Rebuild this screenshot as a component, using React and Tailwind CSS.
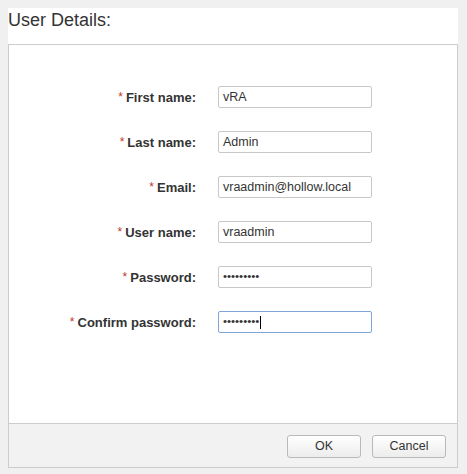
import React from "react"

const FIELDS = [
  { label: "First name:", value: "vRA" },
  { label: "Last name:", value: "Admin" },
  { label: "Email:", value: "vraadmin@hollow.local" },
  { label: "User name:", value: "vraadmin" },
  { label: "Password:", value: "•••••••••", secret: true },
  { label: "Confirm password:", value: "•••••••••", secret: true, focused: true },
]

function Field({ label, value, secret, focused }) {
  return (
    <div className="flex items-center h-[22px]">
      <div className="w-[187px] text-right text-[13px] font-bold text-[#333] leading-none">
        <span className="text-[#c0392b] font-normal text-[12px] mr-[3px] relative -top-[1px]">*</span>
        {label}
      </div>
      <div
        className={`ml-[22px] w-[154px] h-[22px] flex items-center px-[4px] rounded-[2px] border bg-white
          ${focused ? "border-[#7ea6d8]" : "border-[#c8c8c8]"}`}>
        <span className={`text-[#333] whitespace-nowrap ${secret ? "text-[11.5px]" : "text-[12.5px]"}`}>
          {value}
        </span>
        {focused && <span className="w-px h-[13px] bg-black ml-[1px]" />}
      </div>
    </div>
  )
}

function Btn({ children }) {
  return (
    <button className="w-[74px] h-[23px] rounded-[3px] border border-[#b9b9b9] bg-gradient-to-b from-white to-[#ececec]
      text-[12.5px] text-[#333]">
      {children}
    </button>
  )
}

export default function App() {
  return (
    <div className="w-[467px] h-[474px] bg-[#f0f0f0] pt-2 pl-2 pr-[9px]"
      style={{ fontFamily: '"Liberation Sans", Arial, sans-serif' }}>
      <div className="h-[36px] bg-white">
        <h1 className="text-[18px] text-[#333] leading-none pt-[3px]">User Details:</h1>
      </div>
      <div className="border border-[#cccccc] h-[424px] flex flex-col">
        <div className="flex-1 bg-white pt-[41px] flex flex-col gap-[23px]">
          {FIELDS.map(f => <Field key={f.label} {...f} />)}
        </div>
        <div className="h-[44px] bg-[#f2f2f2] border-t border-[#cccccc] flex items-center justify-end gap-[11px] pr-[11px] pt-[1px]">
          <Btn>OK</Btn>
          <Btn>Cancel</Btn>
        </div>
      </div>
    </div>
  )
}
